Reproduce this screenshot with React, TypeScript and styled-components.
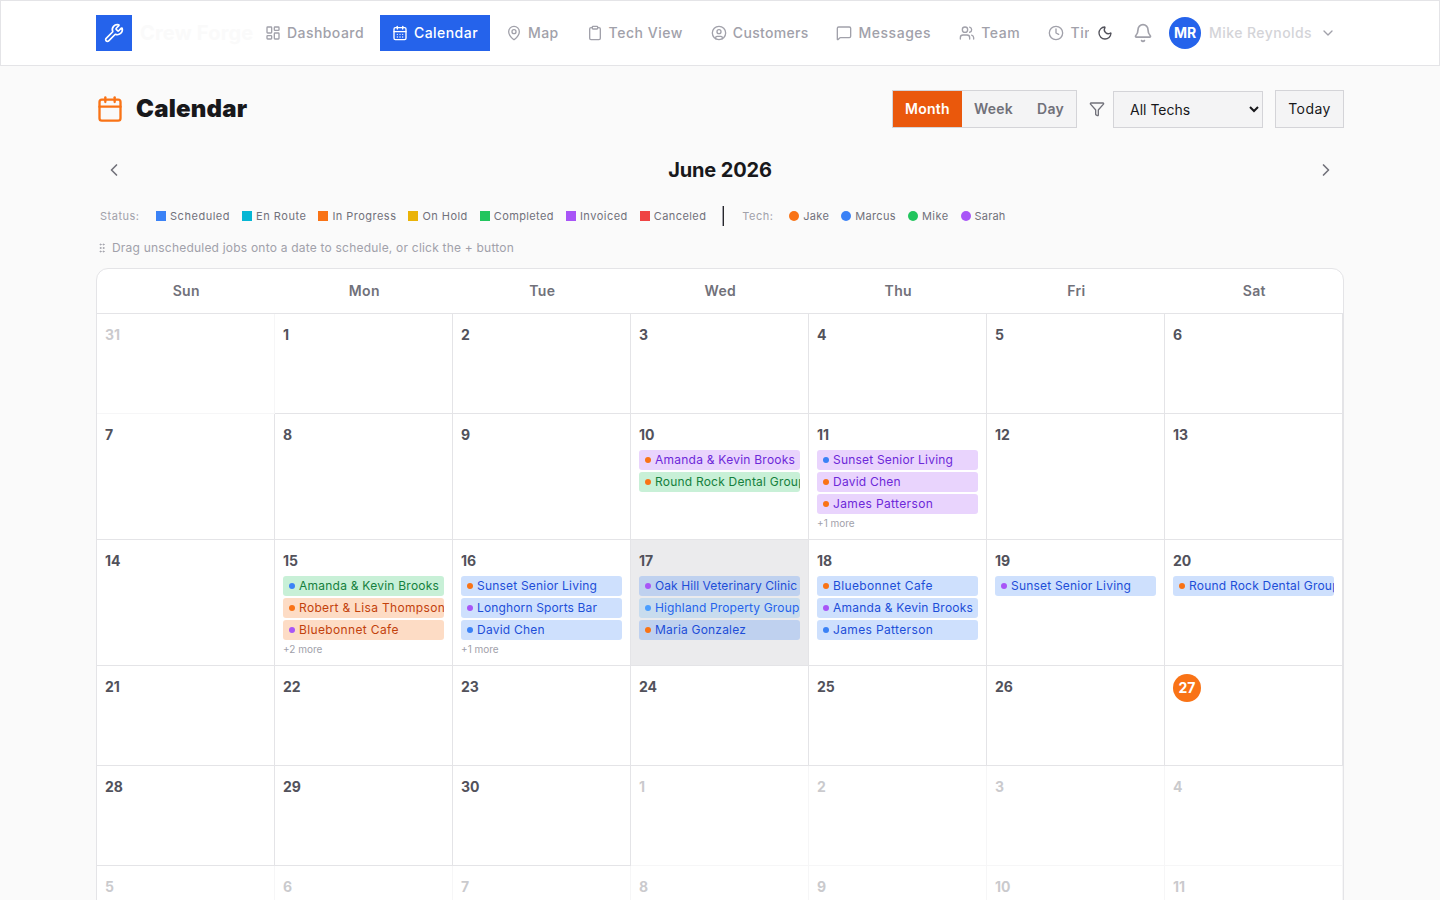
import React from 'react';
import styled, { createGlobalStyle, css } from 'styled-components';
import {
  Bell,
  Calendar as CalendarIcon,
  CalendarDays,
  ChevronDown,
  ChevronLeft,
  ChevronRight,
  CircleUser,
  Clipboard,
  Clock,
  Filter,
  GripVertical,
  LayoutDashboard,
  MapPin,
  MessageSquare,
  Moon,
  Users,
  Wrench,
} from 'lucide-react';

const GlobalStyle = createGlobalStyle`
  *, *::before, *::after { box-sizing: border-box; }
  body {
    margin: 0;
    height: 900px;
    overflow: hidden;
    background: #fafafa;
    color: #18181b;
    font-family: Inter, "Liberation Sans", sans-serif;
    font-size: 16px;
    line-height: 1.5;
  }
  button, select { font-family: inherit; margin: 0; }
  svg { flex-shrink: 0; display: block; }
`;

const Header = styled.header`
  height: 66px;
  background: #fff;
  border: 1px solid #e4e4e7;
`;

const HeaderInner = styled.div`
  width: 1248px;
  height: 64px;
  margin: 0 auto;
  display: flex;
  align-items: center;
`;

const Logo = styled.div`
  display: flex;
  align-items: center;
  gap: 8px;
  flex-shrink: 0;
  width: 157px;
`;

const LogoMark = styled.div`
  width: 36px;
  height: 36px;
  flex-shrink: 0;
  display: flex;
  align-items: center;
  justify-content: center;
  background: #2563eb;
  color: #fff;
`;

const LogoText = styled.span`
  font-size: 20px;
  font-weight: 700;
  line-height: 28px;
  letter-spacing: 0.2px;
  color: #fafafa;
  white-space: nowrap;
`;

const Nav = styled.nav`
  display: flex;
  gap: 4px;
  width: 836px;
  overflow: hidden;
`;

const NavItem = styled.a<{ $active?: boolean; $tracking: number }>`
  display: flex;
  align-items: center;
  gap: 6px;
  height: 36px;
  padding: 0 12px;
  flex-shrink: 0;
  font-size: 14px;
  line-height: 20px;
  font-weight: 500;
  letter-spacing: ${p => p.$tracking}px;
  white-space: nowrap;
  color: ${p => (p.$active ? '#fff' : '#a1a1aa')};
  background: ${p => (p.$active ? '#2563eb' : 'transparent')};
`;

const Account = styled.div`
  display: flex;
  align-items: center;
  margin-left: 8px;
  color: #a1a1aa;
`;

const MoonButton = styled.span`
  color: #52525b;
  margin-right: 20px;
`;

const Avatar = styled.span`
  width: 32px;
  height: 32px;
  margin: 0 8px 0 16px;
  border-radius: 50%;
  display: flex;
  align-items: center;
  justify-content: center;
  background: #2563eb;
  color: #fff;
  font-size: 14px;
  line-height: 20px;
  font-weight: 700;
`;

const UserName = styled.span`
  font-size: 14px;
  line-height: 20px;
  font-weight: 500;
  letter-spacing: 0.45px;
  color: #d4d4d8;
  margin-right: 8px;
  white-space: nowrap;
`;

const Main = styled.main`
  width: 1248px;
  margin: 0 auto;
  padding-top: 24px;
`;

const TitleRow = styled.div`
  display: flex;
  align-items: center;
  justify-content: space-between;
  height: 38px;
`;

const Title = styled.h1`
  display: flex;
  align-items: center;
  gap: 12px;
  margin: 0;
  font-size: 24px;
  font-weight: 900;
  line-height: 32px;
  letter-spacing: 0.2px;
  svg { color: #f97316; }
`;

const Controls = styled.div`
  display: flex;
  align-items: center;
`;

const Segments = styled.div`
  display: flex;
  width: 185px;
  height: 38px;
  border: 1px solid #d4d4d8;
  background: #f4f4f5;
  margin-right: 12px;
`;

const Segment = styled.button<{ $active?: boolean }>`
  border: 0;
  padding: 0 12px;
  font-size: 14px;
  line-height: 20px;
  font-weight: 600;
  letter-spacing: 0.27px;
  background: ${p => (p.$active ? '#ea580c' : 'transparent')};
  color: ${p => (p.$active ? '#fff' : '#71717a')};
`;

const TechFilter = styled.label`
  display: flex;
  align-items: center;
  gap: 8px;
  margin-right: 12px;
  color: #71717a;
`;

const TechSelect = styled.select`
  width: 150px;
  height: 37px;
  margin-top: 1px;
  padding: 0 12px;
  border: 1px solid #d4d4d8;
  border-radius: 0;
  background: #f4f4f5;
  color: #18181b;
  font-size: 14px;
`;

const TodayButton = styled.button`
  width: 69px;
  height: 38px;
  padding: 0;
  border: 1px solid #d4d4d8;
  background: #f4f4f5;
  color: #18181b;
  font-size: 14px;
  line-height: 20px;
  letter-spacing: 0.45px;
`;

const MonthRow = styled.div`
  display: flex;
  align-items: center;
  justify-content: space-between;
  height: 36px;
  margin-top: 24px;
  padding: 0 8px;
  color: #71717a;
`;

const MonthTitle = styled.h2`
  margin: 0;
  font-size: 20px;
  font-weight: 700;
  line-height: 28px;
  letter-spacing: -0.15px;
  color: #18181b;
`;

const Legend = styled.div`
  display: flex;
  align-items: center;
  gap: 12px;
  height: 20px;
  margin-top: 18px;
  padding-left: 4px;
  font-size: 11px;
  color: #71717a;
`;

const LegendLabel = styled.span<{ $width: number }>`
  width: ${p => p.$width}px;
  letter-spacing: 0.5px;
  color: #a1a1aa;
`;

const LegendItem = styled.span<{ $tracking: number }>`
  display: flex;
  align-items: center;
  gap: 4px;
  letter-spacing: ${p => p.$tracking}px;
`;

const Swatch = styled.i<{ $color: string; $round?: boolean }>`
  width: 10px;
  height: 10px;
  background: ${p => p.$color};
  border-radius: ${p => (p.$round ? '50%' : '0')};
`;

const Divider = styled.span`
  width: 2px;
  height: 20px;
  margin: 0 6px 0 4px;
  border-left: 1px solid #a1a1aa;
  background: #27272a;
`;

const Hint = styled.p`
  display: flex;
  align-items: center;
  gap: 4px;
  height: 16px;
  margin: 14px 0 12px;
  font-size: 12px;
  line-height: 16px;
  letter-spacing: 0.21px;
  color: #a1a1aa;
`;

const Grid = styled.section`
  border: 1px solid #e4e4e7;
  border-radius: 12px;
  background: #fff;
  overflow: hidden;
`;

const Week = styled.div<{ $height: number }>`
  display: grid;
  grid-template-columns: repeat(7, 178px);
  height: ${p => p.$height}px;
`;

const WeekHead = styled(Week)`
  border-bottom: 1px solid #e4e4e7;
`;

const DayName = styled.div`
  padding: 12px 0;
  text-align: center;
  font-size: 14px;
  line-height: 20px;
  font-weight: 600;
  letter-spacing: 0.35px;
  text-indent: 0.6px;
  color: #71717a;
`;

const Cell = styled.div<{ $outside: boolean; $hovered: boolean }>`
  padding: 8px;
  border-right: 1px solid #e4e4e7;
  border-bottom: 1px solid #e4e4e7;
  min-width: 0;
  overflow: hidden;
  background: ${p => (p.$hovered ? '#ebebed' : '#fff')};
  opacity: ${p => (p.$outside ? 0.3 : 1)};
`;

const DayNumber = styled.div<{ $today: boolean }>`
  height: 28px;
  font-size: 14px;
  font-weight: 700;
  line-height: 26px;
  color: #52525b;
  ${p =>
    p.$today &&
    css`
      width: 28px;
      line-height: 28px;
      text-align: center;
      border-radius: 50%;
      background: #f97316;
      color: #fff;
    `}
`;

const Jobs = styled.div`
  display: flex;
  flex-direction: column;
  gap: 2px;
`;

type Status = 'scheduled' | 'enroute' | 'progress' | 'completed' | 'invoiced';

const statusColors: Record<Status, { bg: string; fg: string }> = {
  scheduled: { bg: 'rgba(59, 130, 246, 0.25)', fg: '#1d4ed8' },
  enroute: { bg: 'rgba(59, 160, 246, 0.2)', fg: '#2563eb' },
  progress: { bg: 'rgba(249, 115, 22, 0.25)', fg: '#c2410c' },
  completed: { bg: 'rgba(34, 197, 94, 0.25)', fg: '#15803d' },
  invoiced: { bg: 'rgba(168, 85, 247, 0.25)', fg: '#6d28d9' },
};

const Job = styled.div<{ $status: Status; $tracking: number }>`
  display: flex;
  align-items: center;
  gap: 4px;
  height: 20px;
  padding: 0 6px;
  border-radius: 3px;
  overflow: hidden;
  white-space: nowrap;
  font-size: 12px;
  line-height: 16px;
  letter-spacing: ${p => p.$tracking}px;
  background: ${p => statusColors[p.$status].bg};
  color: ${p => statusColors[p.$status].fg};
`;

const Dot = styled.i<{ $color: string }>`
  flex-shrink: 0;
  width: 6px;
  height: 6px;
  border-radius: 50%;
  background: ${p => p.$color};
`;

const More = styled.div`
  font-size: 10px;
  line-height: 15px;
  color: #a1a1aa;
`;

const ORANGE = '#f97316';
const BLUE = '#3b82f6';
const SKY = '#4a9eff';
const GREEN = '#22c55e';
const PURPLE = '#a855f7';

const navItems = [
  { icon: LayoutDashboard, label: 'Dashboard', tracking: 0.44 },
  { icon: CalendarDays, label: 'Calendar', tracking: 0.45, active: true },
  { icon: MapPin, label: 'Map', tracking: 0.4 },
  { icon: Clipboard, label: 'Tech View', tracking: 0.52 },
  { icon: CircleUser, label: 'Customers', tracking: 0.3 },
  { icon: MessageSquare, label: 'Messages', tracking: 0.53 },
  { icon: Users, label: 'Team', tracking: 0.6 },
  { icon: Clock, label: 'Time', tracking: 0.6 },
];

const statuses: [string, string, number][] = [
  ['Scheduled', BLUE, 0.53],
  ['En Route', '#06b6d4', 0.52],
  ['In Progress', ORANGE, 0.47],
  ['On Hold', '#eab308', 0.45],
  ['Completed', GREEN, 0.38],
  ['Invoiced', PURPLE, 0.5],
  ['Canceled', '#ef4444', 0.4],
];

const techs: [string, string, number][] = [
  ['Jake', ORANGE, 0.3],
  ['Marcus', BLUE, 0.35],
  ['Mike', GREEN, 0.45],
  ['Sarah', PURPLE, 0.2],
];

const jobTracking: Record<string, number> = {
  'Amanda & Kevin Brooks': 0.24,
  'Round Rock Dental Group': 0.21,
  'Sunset Senior Living': 0.2,
  'David Chen': 0.22,
  'James Patterson': 0.36,
  'Robert & Lisa Thompson': 0.33,
  'Bluebonnet Cafe': 0.36,
  'Longhorn Sports Bar': 0.14,
  'Oak Hill Veterinary Clinic': 0.08,
  'Highland Property Group': 0.14,
  'Maria Gonzalez': 0.2,
};

type JobEntry = [string, Status, string];

const jobsByDay: Record<number, { jobs: JobEntry[]; more?: number }> = {
  10: {
    jobs: [
      ['Amanda & Kevin Brooks', 'invoiced', ORANGE],
      ['Round Rock Dental Group', 'completed', ORANGE],
    ],
  },
  11: {
    jobs: [
      ['Sunset Senior Living', 'invoiced', BLUE],
      ['David Chen', 'invoiced', ORANGE],
      ['James Patterson', 'invoiced', ORANGE],
    ],
    more: 1,
  },
  15: {
    jobs: [
      ['Amanda & Kevin Brooks', 'completed', BLUE],
      ['Robert & Lisa Thompson', 'progress', ORANGE],
      ['Bluebonnet Cafe', 'progress', PURPLE],
    ],
    more: 2,
  },
  16: {
    jobs: [
      ['Sunset Senior Living', 'scheduled', ORANGE],
      ['Longhorn Sports Bar', 'scheduled', PURPLE],
      ['David Chen', 'scheduled', BLUE],
    ],
    more: 1,
  },
  17: {
    jobs: [
      ['Oak Hill Veterinary Clinic', 'scheduled', PURPLE],
      ['Highland Property Group', 'enroute', SKY],
      ['Maria Gonzalez', 'scheduled', ORANGE],
    ],
  },
  18: {
    jobs: [
      ['Bluebonnet Cafe', 'scheduled', ORANGE],
      ['Amanda & Kevin Brooks', 'scheduled', PURPLE],
      ['James Patterson', 'scheduled', BLUE],
    ],
  },
  19: { jobs: [['Sunset Senior Living', 'scheduled', PURPLE]] },
  20: { jobs: [['Round Rock Dental Group', 'scheduled', ORANGE]] },
};

const dayNames = ['Sun', 'Mon', 'Tue', 'Wed', 'Thu', 'Fri', 'Sat'];
const weekHeights = [100, 126, 126, 100, 100, 100];
const TODAY = 27;
const HOVERED = 17;

// June 1 falls on the first Monday, so the grid opens with May 31.
const weeks = weekHeights.map((height, w) => ({
  height,
  days: dayNames.map((_, d) => {
    const n = w * 7 + d;
    if (n < 1) return { label: 31, outside: true };
    if (n > 30) return { label: n - 30, outside: true };
    return { label: n, outside: false };
  }),
}));

export default function App() {
  return (
    <>
      <GlobalStyle />
      <Header>
        <HeaderInner>
          <Logo>
            <LogoMark>
              <Wrench size={20} />
            </LogoMark>
            <LogoText>Crew Forge</LogoText>
          </Logo>
          <Nav>
            {navItems.map(({ icon: Icon, label, active, tracking }) => (
              <NavItem key={label} $active={active} $tracking={tracking}>
                <Icon size={16} />
                {label}
              </NavItem>
            ))}
          </Nav>
          <Account>
            <MoonButton>
              <Moon size={16} />
            </MoonButton>
            <Bell size={20} />
            <Avatar>MR</Avatar>
            <UserName>Mike Reynolds</UserName>
            <ChevronDown size={16} />
          </Account>
        </HeaderInner>
      </Header>
      <Main>
        <TitleRow>
          <Title>
            <CalendarIcon size={28} />
            Calendar
          </Title>
          <Controls>
            <Segments>
              <Segment $active>Month</Segment>
              <Segment>Week</Segment>
              <Segment>Day</Segment>
            </Segments>
            <TechFilter>
              <Filter size={16} />
              <TechSelect defaultValue="all">
                <option value="all">All Techs</option>
              </TechSelect>
            </TechFilter>
            <TodayButton>Today</TodayButton>
          </Controls>
        </TitleRow>
        <MonthRow>
          <ChevronLeft size={20} />
          <MonthTitle>June 2026</MonthTitle>
          <ChevronRight size={20} />
        </MonthRow>
        <Legend>
          <LegendLabel $width={44}>Status:</LegendLabel>
          {statuses.map(([label, color, tracking]) => (
            <LegendItem key={label} $tracking={tracking}>
              <Swatch $color={color} />
              {label}
            </LegendItem>
          ))}
          <Divider />
          <LegendLabel $width={35}>Tech:</LegendLabel>
          {techs.map(([label, color, tracking]) => (
            <LegendItem key={label} $tracking={tracking}>
              <Swatch $color={color} $round />
              {label}
            </LegendItem>
          ))}
        </Legend>
        <Hint>
          <GripVertical size={12} />
          Drag unscheduled jobs onto a date to schedule, or click the + button
        </Hint>
        <Grid>
          <WeekHead $height={45}>
            {dayNames.map(name => (
              <DayName key={name}>{name}</DayName>
            ))}
          </WeekHead>
          {weeks.map((week, w) => (
            <Week key={w} $height={week.height}>
              {week.days.map((day, d) => {
                const entry = day.outside ? undefined : jobsByDay[day.label];
                return (
                  <Cell key={d} $outside={day.outside} $hovered={!day.outside && day.label === HOVERED}>
                    <DayNumber $today={!day.outside && day.label === TODAY}>{day.label}</DayNumber>
                    {entry && (
                      <Jobs>
                        {entry.jobs.map(([name, status, color]) => (
                          <Job key={name} $status={status} $tracking={jobTracking[name]}>
                            <Dot $color={color} />
                            {name}
                          </Job>
                        ))}
                        {entry.more && <More>+{entry.more} more</More>}
                      </Jobs>
                    )}
                  </Cell>
                );
              })}
            </Week>
          ))}
        </Grid>
      </Main>
    </>
  );
}
